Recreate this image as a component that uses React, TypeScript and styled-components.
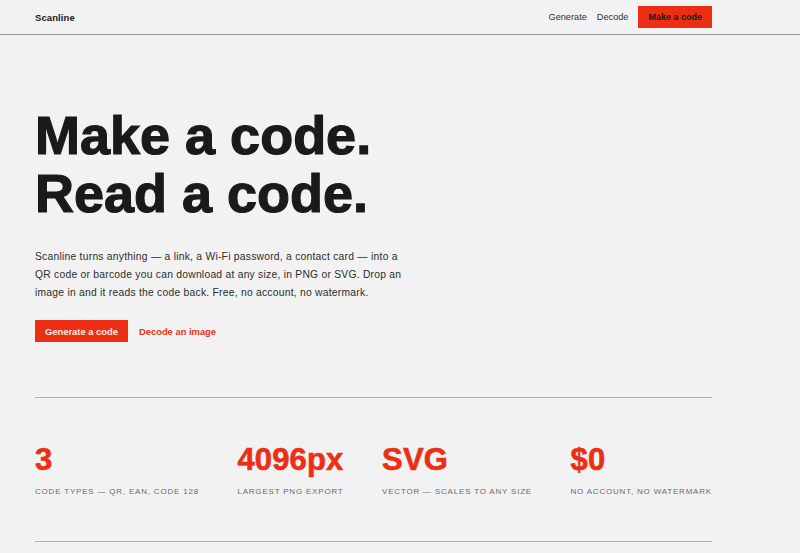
import styled, { createGlobalStyle } from 'styled-components'

const GlobalStyle = createGlobalStyle`
  html, body {
    margin: 0;
    padding: 0;
    background: #f2f2f2;
  }
  body {
    font-family: "Liberation Sans", Arial, sans-serif;
    color: #1a1a1a;
  }
  * {
    box-sizing: border-box;
  }
`

const RED = '#ec2f14'

const Page = styled.div`
  min-height: 553px;
  background: #f2f2f2;
`

const Header = styled.header`
  height: 35px;
  border-bottom: 1px solid #9a9a9a;
`

const Container = styled.div`
  width: 677px;
  margin-left: 35px;
`

const HeaderInner = styled(Container)`
  height: 100%;
  display: flex;
  align-items: center;
  justify-content: space-between;
`

const Logo = styled.div`
  font-size: 9.5px;
  font-weight: 700;
  letter-spacing: 0.01em;
`

const Nav = styled.nav`
  display: flex;
  align-items: center;
  gap: 10px;
`

const NavLink = styled.a`
  font-size: 9.2px;
  color: #333;
  text-decoration: none;
`

const Button = styled.a<{ $light?: boolean }>`
  display: inline-flex;
  align-items: center;
  height: 22px;
  padding: 0 10px;
  background: ${RED};
  color: ${props => (props.$light ? '#fbeae6' : '#1a1a1a')};
  font-size: ${props => (props.$light ? '9.4px' : '9px')};
  font-weight: 700;
  text-decoration: none;
`

const Hero = styled.section`
  padding-top: 71px;
`

const Headline = styled.h1`
  margin: 0;
  font-size: 54px;
  line-height: 58px;
  font-weight: 700;
  letter-spacing: 0;
  color: #1a1a1a;
  -webkit-text-stroke: 1.2px #1a1a1a;
`

const Lead = styled.p`
  margin: 26px 0 0;
  max-width: 380.5px;
  font-size: 10.3px;
  letter-spacing: 0.25px;
  line-height: 18px;
  color: #2d2d2d;
`

const Actions = styled.div`
  display: flex;
  align-items: center;
  gap: 11px;
  margin-top: 18px;
`

const TextLink = styled.a`
  color: ${RED};
  font-size: 9.4px;
  font-weight: 700;
  text-decoration: none;
`

const Stats = styled.section`
  margin-top: 55px;
  border-top: 1.5px solid #b0b0b0;
  border-bottom: 1.5px solid #b0b0b0;
  padding: 46px 0 43px;
  display: flex;
  justify-content: space-between;
`

const Stat = styled.div`
  display: flex;
  flex-direction: column;
`

const StatValue = styled.div`
  font-size: 31px;
  line-height: 31px;
  font-weight: 700;
  color: ${RED};
  letter-spacing: 0.005em;
  -webkit-text-stroke: 0.6px ${RED};
`

const StatLabel = styled.div`
  margin-top: 11px;
  font-size: 8px;
  line-height: 12px;
  letter-spacing: 0.1em;
  text-transform: uppercase;
  color: #6a6a6a;
`

const stats = [
  { value: '3', label: 'Code types — QR, EAN, Code 128' },
  { value: '4096px', label: 'Largest PNG export' },
  { value: 'SVG', label: 'Vector — scales to any size' },
  { value: '$0', label: 'No account, no watermark' },
]

export default function App() {
  return (
    <Page>
      <GlobalStyle />
      <Header>
        <HeaderInner>
          <Logo>Scanline</Logo>
          <Nav>
            <NavLink href="#">Generate</NavLink>
            <NavLink href="#">Decode</NavLink>
            <Button href="#">Make a code</Button>
          </Nav>
        </HeaderInner>
      </Header>

      <Container>
        <Hero>
          <Headline>
            Make a code.
            <br />
            Read a code.
          </Headline>
          <Lead>
            Scanline turns anything — a link, a Wi-Fi password, a contact card — into a QR code or
            barcode you can download at any size, in PNG or SVG. Drop an image in and it reads the
            code back. Free, no account, no watermark.
          </Lead>
          <Actions>
            <Button href="#" $light>Generate a code</Button>
            <TextLink href="#">Decode an image</TextLink>
          </Actions>
        </Hero>

        <Stats>
          {stats.map(s => (
            <Stat key={s.value}>
              <StatValue>{s.value}</StatValue>
              <StatLabel>{s.label}</StatLabel>
            </Stat>
          ))}
        </Stats>
      </Container>
    </Page>
  )
}
